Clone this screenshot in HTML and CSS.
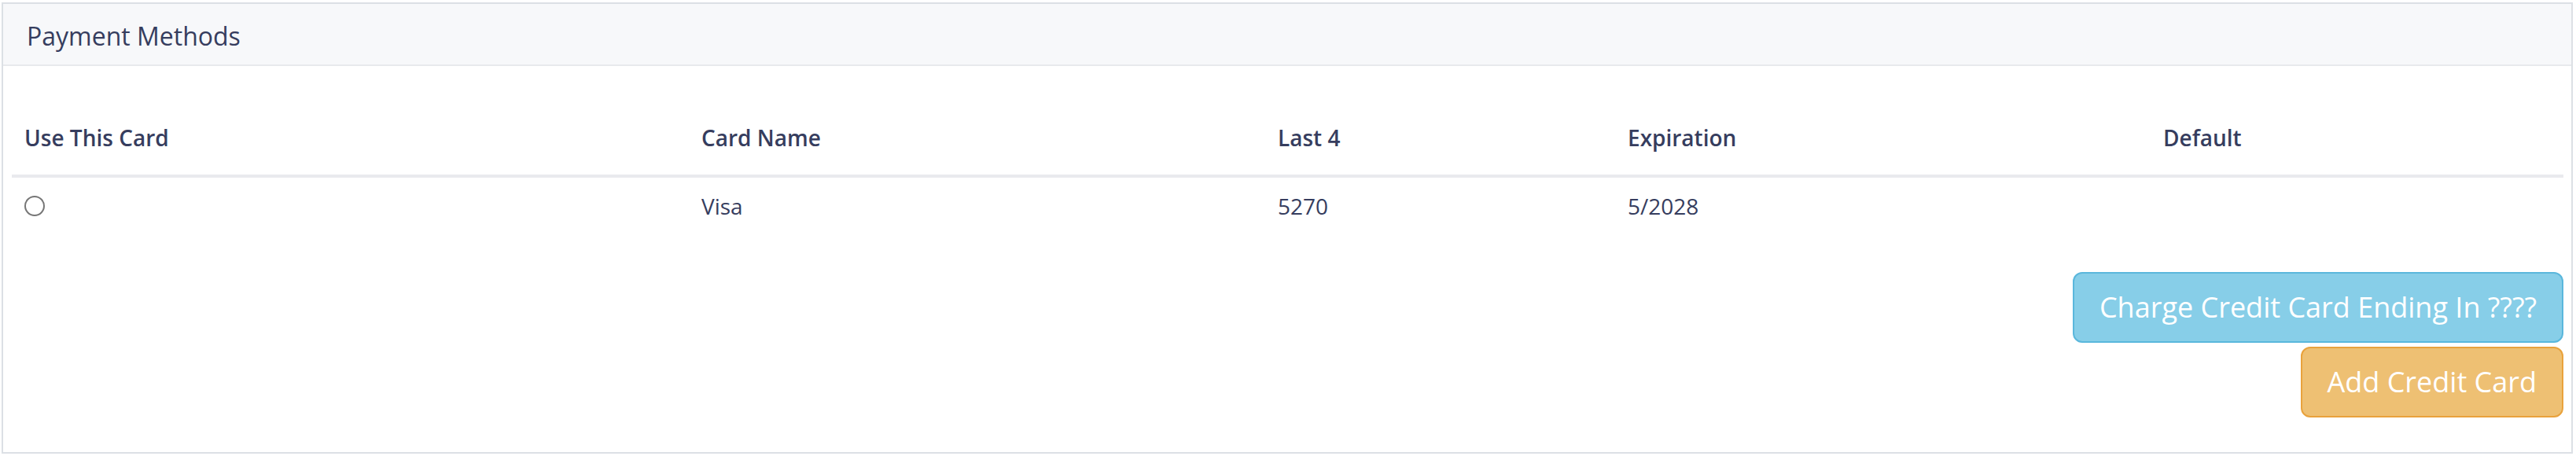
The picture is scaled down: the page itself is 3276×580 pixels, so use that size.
FILE: index.html
```html
<!DOCTYPE html>
<html lang="en">
<head>
    <meta charset="UTF-8">
    <meta name="viewport" content="width=device-width, initial-scale=1.0">
    <title>Payment Methods</title>
    <link rel="stylesheet" href="styles.css">
</head>
<body>

    <div class="panel">
        <div class="panel-heading">
            <h3 class="panel-title">Payment Methods</h3>
        </div>

        <div class="panel-body">
            <table class="cards-table">
                <colgroup>
                    <col class="col-use">
                    <col class="col-name">
                    <col class="col-last">
                    <col class="col-exp">
                    <col class="col-default">
                </colgroup>
                <thead>
                    <tr>
                        <th>Use This Card</th>
                        <th>Card Name</th>
                        <th>Last 4</th>
                        <th>Expiration</th>
                        <th>Default</th>
                    </tr>
                </thead>
                <tbody>
                    <tr>
                        <td><input type="radio" name="card" value="5270" class="card-radio"></td>
                        <td>Visa</td>
                        <td>5270</td>
                        <td>5/2028</td>
                        <td></td>
                    </tr>
                </tbody>
            </table>

            <!-- Actions -->
            <div class="actions">
                <button type="button" class="btn btn-info">Charge Credit Card Ending In ????</button>
                <button type="button" class="btn btn-warning">Add Credit Card</button>
            </div>
        </div>
    </div>

</body>
</html>
```

FILE: styles.css
```css
body {
    margin: 0;
    font-family: 'Open Sans', 'Liberation Sans', sans-serif;
    color: #363d5e;
    background: #fff;
}

.panel {
    margin: 3px 4px 0 2px;
    border: 2px solid #dce0e5;
    background: #fff;
}

.panel-heading {
    background-color: #f7f8fa;
    border-bottom: 2px solid #e8eaed;
    padding: 22px 30px 18px;
}

.panel-title {
    margin: 0;
    font-size: 32px;
    font-weight: 400;
    line-height: 37px;
    color: #363d5e;
}

.panel-body {
    padding: 44px 10px 44px 11px;
}

/* Table */
.cards-table {
    width: 100%;
    border-collapse: collapse;
    table-layout: fixed;
    font-size: 28px;
    line-height: 40px;
}

.col-use { width: 861px; }
.col-name { width: 733px; }
.col-last { width: 445px; }
.col-exp { width: 681px; }

.cards-table th {
    text-align: left;
    font-weight: 600;
    padding: 27px 16px 27px;
    border-bottom: 4px solid #e9eaee;
}

.cards-table td {
    padding: 16px 16px;
    vertical-align: top;
}

.card-radio {
    appearance: none;
    display: block;
    width: 26px;
    height: 26px;
    margin: 7px 0 0 0;
    border: 2px solid #767676;
    border-radius: 50%;
    background: #fff;
}

/* Buttons */
.actions {
    margin-top: 48px;
    display: flex;
    flex-direction: column;
    align-items: flex-end;
    gap: 5px;
}

.btn {
    font-family: inherit;
    font-size: 36px;
    line-height: 48px;
    padding: 19px 32px;
    border: 2px solid transparent;
    border-radius: 12px;
    color: #fff;
    cursor: pointer;
}

.btn-info {
    background-color: #87cee8;
    border-color: #5ab7dc;
}

.btn-warning {
    background-color: #eec073;
    border-color: #e9a23c;
}
```
